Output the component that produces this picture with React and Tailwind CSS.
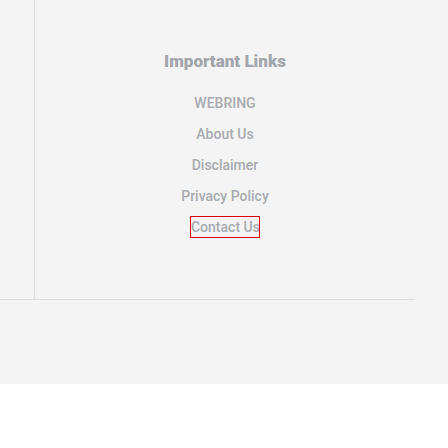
const links = ['WEBRING', 'About Us', 'Disclaimer', 'Privacy Policy', 'Contact Us'];

export default function App() {
  return (
    <div className="w-[448px] h-[448px] bg-white" style={{ fontFamily: 'Roboto, sans-serif' }}>
      <div className="h-[384px] bg-[#f4f4f4]">
        <div className="flex w-[415px] h-[300px] border-b border-[#dddddd]">
          <div className="w-[35px] shrink-0 border-r border-[#dddddd]" />
          <div className="flex-1 flex flex-col items-center pt-[49px]">
            <h2 className="text-[17px] leading-[24px] font-black text-[#a2a5aa]">Important Links</h2>
            <ul className="mt-[20px] flex flex-col items-center gap-[11px]">
              {links.map((label) => (
                <li key={label} className="leading-[20px]">
                  <a
                    href="#"
                    className={
                      label === 'Contact Us'
                        ? 'inline-block w-[68px] whitespace-nowrap text-[14px] font-medium text-[#a8abb0] outline outline-1 outline-[#e00000]'
                        : 'inline-block text-[14px] font-medium text-[#a8abb0]'
                    }
                  >
                    {label}
                  </a>
                </li>
              ))}
            </ul>
          </div>
        </div>
      </div>
    </div>
  );
}
